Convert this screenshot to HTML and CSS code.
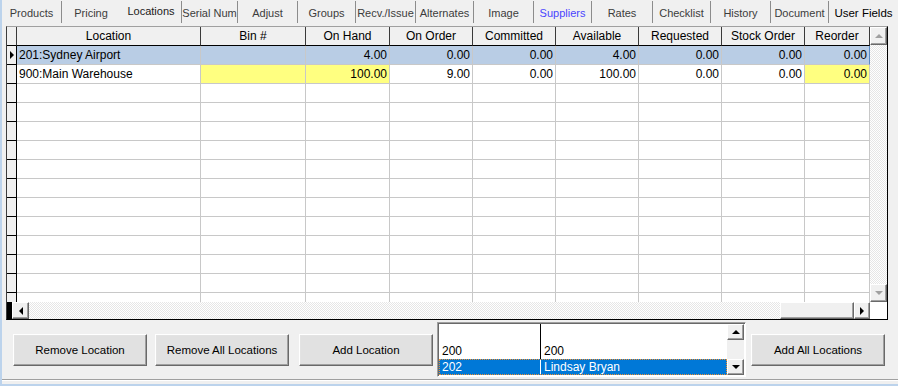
FILE: index.html
```html
<!DOCTYPE html>
<html lang="en">
<head>
  <meta charset="UTF-8">
  <title>Locations</title>
  <link rel="stylesheet" href="styles.css">
</head>
<body>
  <div class="window">
    <div class="tabs">
      <div class="tab">Products</div>
      <div class="tab tab-before-active">Pricing</div>
      <div class="tab tab-active">Locations</div>
      <div class="tab">Serial Num</div>
      <div class="tab">Adjust</div>
      <div class="tab">Groups</div>
      <div class="tab">Recv./Issue</div>
      <div class="tab">Alternates</div>
      <div class="tab">Image</div>
      <div class="tab tab-link">Suppliers</div>
      <div class="tab">Rates</div>
      <div class="tab">Checklist</div>
      <div class="tab">History</div>
      <div class="tab">Document</div>
      <div class="tab tab-last">User Fields</div>
    </div>

    <div class="grid-box">
      <div class="grid-main">
        <div class="table">
          <div class="row head">
            <div class="cell rh"></div>
            <div class="cell">Location</div>
            <div class="cell">Bin #</div>
            <div class="cell">On Hand</div>
            <div class="cell">On Order</div>
            <div class="cell">Committed</div>
            <div class="cell">Available</div>
            <div class="cell">Requested</div>
            <div class="cell">Stock Order</div>
            <div class="cell">Reorder</div>
          </div>
          <div class="tbody" id="tbody"></div>
        </div>
        <div class="vscroll">
          <div class="sbtn"><span class="arrow-up gray"></span></div>
          <div class="track"></div>
          <div class="sbtn"><span class="arrow-down gray"></span></div>
        </div>
      </div>
      <div class="hscroll">
        <div class="hblack"></div>
        <div class="sbtn hbtn-left"><span class="arrow-left"></span></div>
        <div class="track"></div>
        <div class="thumb"></div>
        <div class="sbtn hbtn-right"><span class="arrow-right"></span></div>
        <div class="corner"></div>
      </div>
    </div>

    <div class="bottom">
      <button class="btn">Remove Location</button>
      <button class="btn btn-gap">Remove All Locations</button>
      <button class="btn btn-gap2">Add Location</button>
      <div class="listbox">
        <div class="list-items">
          <div class="list-row blank"><span class="lc1"></span><span class="lc2"></span></div>
          <div class="list-row"><span class="lc1">200</span><span class="lc2">200</span></div>
          <div class="list-row sel"><span class="lc1">202</span><span class="lc2">Lindsay Bryan</span></div>
        </div>
        <div class="list-scroll">
          <div class="sbtn lbtn"><span class="arrow-up"></span></div>
          <div class="ltrack"></div>
          <div class="sbtn lbtn"><span class="arrow-down"></span></div>
        </div>
      </div>
      <button class="btn btn-gap3">Add All Locations</button>
    </div>
  </div>

  <script>
    // cell index: 0 location, 1 bin, 2 on hand ... 8 reorder
    const rows = [
      { loc: "201:Sydney Airport", bin: "", vals: ["4.00", "0.00", "0.00", "4.00", "0.00", "0.00", "0.00"], selected: true, yellow: [] },
      { loc: "900:Main Warehouse", bin: "", vals: ["100.00", "9.00", "0.00", "100.00", "0.00", "0.00", "0.00"], yellow: [1, 2, 8] }
    ];
    const tbody = document.getElementById("tbody");

    for (let i = 0; i < 14; i++) {
      const data = rows[i];
      const row = document.createElement("div");
      row.className = "row" + (data && data.selected ? " sel" : "");
      const cells = data ? [data.loc, data.bin, ...data.vals] : ["", "", "", "", "", "", "", "", ""];
      let html = `<div class="cell rh">${data && data.selected ? '<span class="pointer"></span>' : ""}</div>`;
      cells.forEach((text, c) => {
        const cls = ["cell"];
        if (c >= 2) cls.push("num");
        if (data && data.yellow.includes(c)) cls.push("yellow");
        if (c === 8) cls.push("last");
        html += `<div class="${cls.join(" ")}">${text}</div>`;
      });
      row.innerHTML = html;
      tbody.appendChild(row);
    }
  </script>
</body>
</html>
```

FILE: styles.css
```css
body {
  margin: 0;
  background: #bcd3ec;
  font-family: "Liberation Sans", Arial, sans-serif;
  color: #000;
}
.window {
  margin-left: 2px;
  width: 896px;
  height: 384px;
  background: #f0f0f0;
  overflow: hidden;
}

/* tabs */
.tabs {
  display: grid;
  grid-template-columns: 60px 59px 61px 56px 60px 58px 60px 58px 60px 58px 61px 58px 60px 58px 1fr;
  height: 24px;
  margin-bottom: 2px;
}
.tab {
  font-size: 11px;
  color: #3c3c3c;
  text-align: center;
  line-height: 22px;
  padding-top: 1px;
  box-sizing: border-box;
  white-space: nowrap;
  overflow: hidden;
  border-right: 1px solid #8c8c8c;
  margin: 1px 0;
}
.tab-before-active {
  border-right-color: transparent;
}
.tab-active {
  padding-top: 0;
  line-height: 20px;
  color: #202020;
}
.tab-link {
  color: #4a44ff;
}
.tab-last {
  color: #000;
  font-size: 11.5px;
  border-right: none;
}

/* grid */
.grid-box {
  margin-left: 4px;
  width: 882px;
  box-sizing: border-box;
  border: 1px solid #000;
  border-top-color: #a0a0a0;
  border-left-color: #3c3c3c;
  display: flex;
  flex-direction: column;
}
.grid-main {
  display: flex;
  height: 275px;
}
.table {
  width: 863px;
  background: #fff;
}
.row {
  display: grid;
  grid-template-columns: 10px 184px 105px 84px 83px 83px 83px 83px 83px 65px;
  height: 19px;
}
.cell {
  box-sizing: border-box;
  border-right: 1px solid #c8c8c8;
  border-bottom: 1px solid #c8c8c8;
  padding: 0 2px;
  font-size: 12px;
  line-height: 18px;
  white-space: nowrap;
  overflow: hidden;
}
.num {
  text-align: right;
}
.rh {
  background: #f0f0f0;
  border-right-color: #000;
  border-bottom-color: #000;
  padding: 0;
  display: flex;
  align-items: center;
  justify-content: center;
}
.head .cell {
  background: #f0f0f0;
  border-right-color: #3a3a3a;
  border-bottom-color: #000;
  text-align: center;
}
.tbody {
  height: 256px;
  overflow: hidden;
}
.row.sel .cell:not(.rh) {
  background: #b9cde5;
}
.row.sel .last {
  border-right-color: #5a8ac4;
}
.yellow {
  background: #ffff80;
}
.pointer {
  width: 0;
  height: 0;
  border-left: 4px solid #000;
  border-top: 4px solid transparent;
  border-bottom: 4px solid transparent;
  margin-left: 1px;
}

/* scrollbars */
.vscroll {
  width: 17px;
  display: flex;
  flex-direction: column;
}
.track {
  flex: 1;
  background: repeating-conic-gradient(#e6e6e6 0 25%, #fff 0 50%) 0 0 / 2px 2px;
}
.sbtn {
  box-sizing: border-box;
  height: 17px;
  width: 17px;
  background: #f0f0f0;
  border: 1px solid;
  border-color: #fff #696969 #696969 #fff;
  box-shadow: inset -1px -1px #a0a0a0;
  display: flex;
  align-items: center;
  justify-content: center;
}
.vscroll .sbtn {
  height: 18px;
}
.arrow-up, .arrow-down {
  width: 0;
  height: 0;
  border-left: 4px solid transparent;
  border-right: 4px solid transparent;
}
.arrow-up {
  border-bottom: 4px solid #000;
}
.arrow-down {
  border-top: 4px solid #000;
}
.arrow-up.gray {
  border-bottom-color: #a0a0a0;
}
.arrow-down.gray {
  border-top-color: #a0a0a0;
}
.arrow-left, .arrow-right {
  width: 0;
  height: 0;
  border-top: 4px solid transparent;
  border-bottom: 4px solid transparent;
}
.arrow-left {
  border-right: 4px solid #000;
}
.arrow-right {
  border-left: 4px solid #000;
}
.hscroll {
  display: flex;
  height: 17px;
}
.hblack {
  width: 5px;
  background: #000;
}
.hbtn-right {
  width: 16px;
}
.thumb {
  width: 74px;
  box-sizing: border-box;
  background: #f0f0f0;
  border: 1px solid;
  border-color: #fff #696969 #696969 #fff;
  box-shadow: inset -1px -1px #a0a0a0;
}
.corner {
  width: 17px;
  background: #fff;
}

/* bottom panel */
.bottom {
  display: flex;
  align-items: center;
  height: 59px;
  padding-left: 11px;
  border-bottom: 1px solid #a0a0a0;
  box-shadow: 0 1px #fff;
}
.btn {
  width: 134px;
  height: 32px;
  box-sizing: border-box;
  background: #e1e1e1;
  border: 1px solid;
  border-color: #fff #696969 #696969 #fff;
  box-shadow: inset -1px -1px #a0a0a0, inset 1px 1px #e3e3e3;
  font-family: "Liberation Sans", Arial, sans-serif;
  font-size: 11.5px;
  color: #000;
  padding: 0;
}
.btn-gap {
  margin-left: 8px;
}
.btn-gap2 {
  margin-left: 10px;
}
.btn-gap3 {
  margin-left: 5px;
}
.listbox {
  margin-left: 4px;
  width: 309px;
  height: 55px;
  box-sizing: border-box;
  background: #fff;
  border: 1px solid;
  border-color: #a0a0a0 #fff #fff #a0a0a0;
  box-shadow: inset 1px 1px #696969;
  display: flex;
  padding: 1px;
}
.list-items {
  flex: 1;
  display: flex;
  flex-direction: column;
}
.list-row {
  display: grid;
  grid-template-columns: 102px 1fr;
  height: 16px;
  font-size: 12px;
  line-height: 16px;
}
.list-row.blank {
  flex: 1;
}
.lc1 {
  border-right: 1px solid #000;
  padding-left: 3px;
}
.lc2 {
  padding-left: 3px;
}
.list-row.sel {
  background: #0078d7;
  color: #fff;
  outline: 1px dotted #f09030;
  outline-offset: -1px;
}
.list-row.sel .lc1 {
  border-right-color: #fff;
}
.list-scroll {
  width: 17px;
  display: flex;
  flex-direction: column;
}
.lbtn {
  height: 16px;
}
.ltrack {
  flex: 1;
  background: #f0f0f0;
}
```
